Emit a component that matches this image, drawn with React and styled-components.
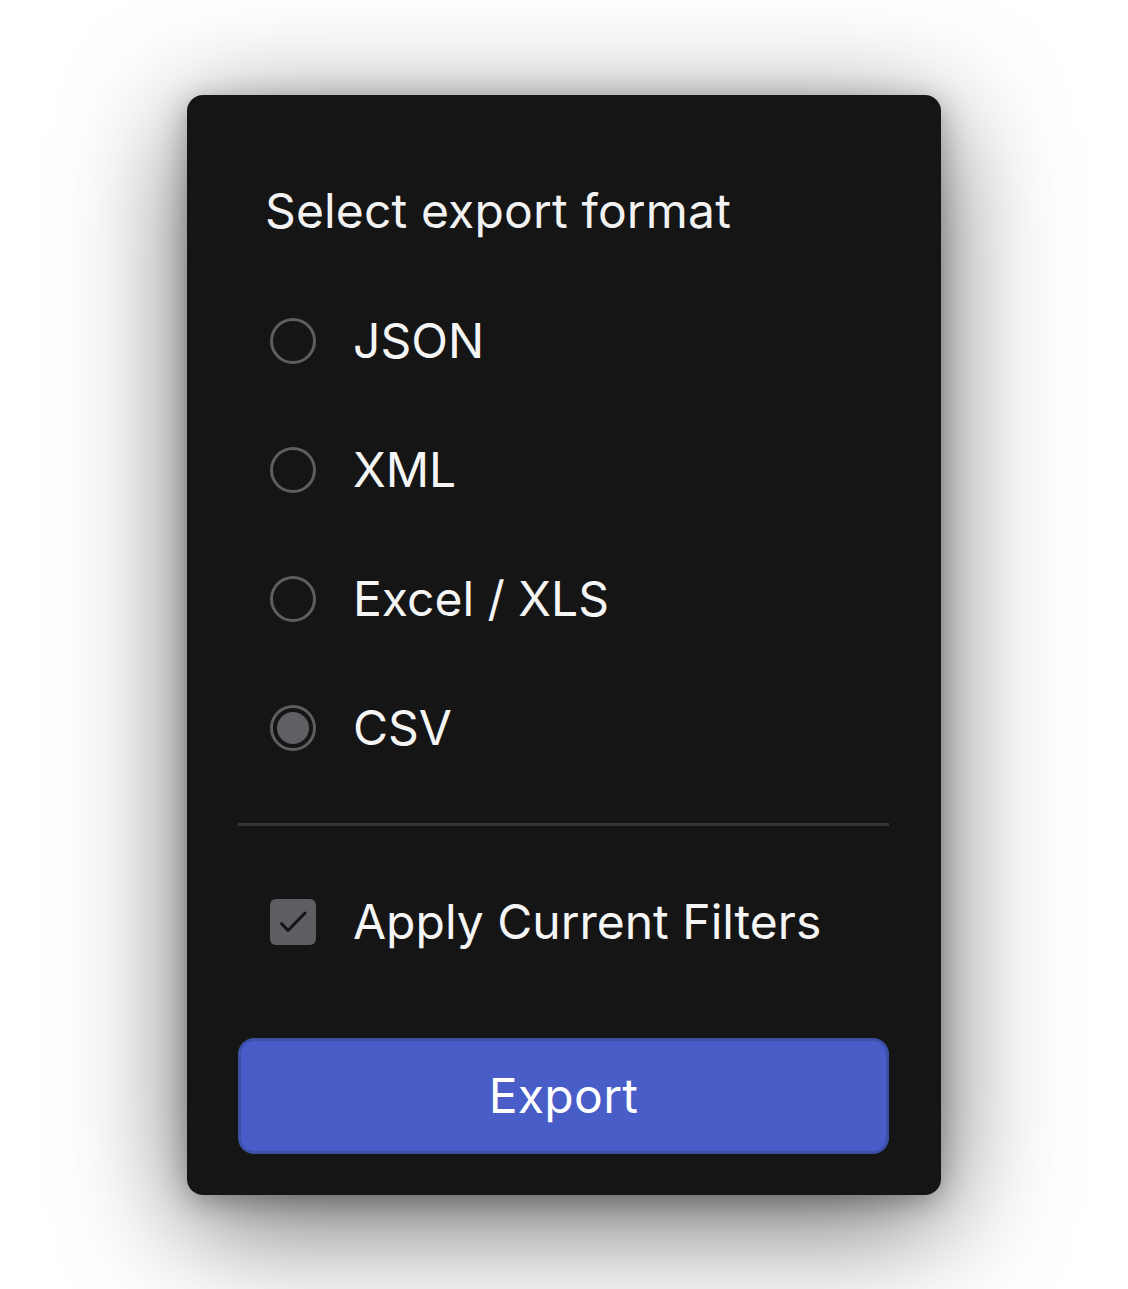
import React, { useState } from "react";
import styled, { createGlobalStyle } from "styled-components";

const Global = createGlobalStyle`
  html, body { margin: 0; padding: 0; background: #ffffff; }
  body { font-family: Inter, "Noto Sans", sans-serif; }
`;

const Page = styled.div`
  min-height: 100vh;
  display: flex;
  align-items: center;
  justify-content: center;
`;

const Card = styled.div`
  width: 754px;
  box-sizing: border-box;
  padding: 0 52px 41px 51px;
  background: #151515;
  border-radius: 16px;
  box-shadow: 0 28px 120px rgba(0, 0, 0, 0.6), 0 6px 30px rgba(0, 0, 0, 0.3);
  display: flex;
  flex-direction: column;
`;

const Title = styled.div`
  margin: 87px 0 0 27px;
  font-size: 48px;
  line-height: 58px;
  color: #f2f2f2;
  letter-spacing: 0.15px;
`;

const List = styled.div`
  margin-top: 37px;
  display: flex;
  flex-direction: column;
`;

const Row = styled.label`
  height: 129px;
  display: flex;
  align-items: center;
  padding-left: 32px;
  gap: 37px;
  cursor: pointer;
`;

const Radio = styled.span`
  width: 46px;
  height: 46px;
  box-sizing: border-box;
  border-radius: 50%;
  border: 3px solid #5e5e5e;
  flex: none;
  display: flex;
  align-items: center;
  justify-content: center;
  &::after {
    content: "";
    width: 32px;
    height: 32px;
    border-radius: 50%;
    background: ${(p) => (p.$checked ? "#5f6064" : "transparent")};
  }
`;

const Label = styled.span`
  font-size: 48px;
  line-height: 58px;
  color: #f5f5f5;
`;

const Divider = styled.div`
  margin-top: 30px;
  height: 3px;
  background: #353535;
`;

const CheckRow = styled.label`
  margin-top: 70px;
  height: 52px;
  display: flex;
  align-items: center;
  padding-left: 32px;
  gap: 37px;
`;

const Checkbox = styled.span`
  width: 46px;
  height: 46px;
  border-radius: 6px;
  background: #5d5e62;
  flex: none;
  display: flex;
`;

const Button = styled.button`
  margin-top: 90px;
  height: 116px;
  width: 100%;
  border-radius: 16px;
  border: 3px solid #3d4fa6;
  background: #485dc8;
  color: #ffffff;
  font-family: Inter, "Noto Sans", sans-serif;
  font-size: 48px;
  letter-spacing: 0.3px;
  cursor: pointer;
`;

const formats = ["JSON", "XML", "Excel / XLS", "CSV"];

export default function App() {
  const [sel, setSel] = useState("CSV");
  return (
    <Page>
      <Global />
      <Card>
        <Title>Select export format</Title>
        <List>
          {formats.map((f) => (
            <Row key={f} onClick={() => setSel(f)}>
              <Radio $checked={sel === f} />
              <Label>{f}</Label>
            </Row>
          ))}
        </List>
        <Divider />
        <CheckRow>
          <Checkbox>
            <svg width="46" height="46" viewBox="0 0 46 46" fill="none" stroke="#141414" strokeWidth="3" strokeLinecap="round" strokeLinejoin="round">
              <path d="M11.5 24.5l6.5 7L35 14" />
            </svg>
          </Checkbox>
          <Label>Apply Current Filters</Label>
        </CheckRow>
        <Button>Export</Button>
      </Card>
    </Page>
  );
}
